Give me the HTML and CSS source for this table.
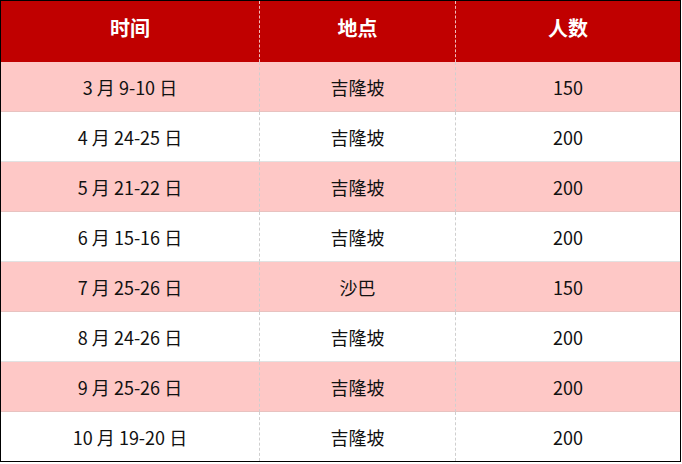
FILE: index.html
```html
<!DOCTYPE html>
<html lang="zh">
<head>
<meta charset="utf-8">
<title>日程</title>
<link rel="stylesheet" href="styles.css">
</head>
<body>
<div class="table">
  <div class="cell head">时间</div>
  <div class="cell head">地点</div>
  <div class="cell head last">人数</div>

  <div class="cell pink">3 月 9-10 日</div>
  <div class="cell pink">吉隆坡</div>
  <div class="cell pink last">150</div>

  <div class="cell">4 月 24-25 日</div>
  <div class="cell">吉隆坡</div>
  <div class="cell last">200</div>

  <div class="cell pink">5 月 21-22 日</div>
  <div class="cell pink">吉隆坡</div>
  <div class="cell pink last">200</div>

  <div class="cell">6 月 15-16 日</div>
  <div class="cell">吉隆坡</div>
  <div class="cell last">200</div>

  <div class="cell pink">7 月 25-26 日</div>
  <div class="cell pink">沙巴</div>
  <div class="cell pink last">150</div>

  <div class="cell">8 月 24-26 日</div>
  <div class="cell">吉隆坡</div>
  <div class="cell last">200</div>

  <div class="cell pink">9 月 25-26 日</div>
  <div class="cell pink">吉隆坡</div>
  <div class="cell pink last">200</div>

  <div class="cell bottom">10 月 19-20 日</div>
  <div class="cell bottom">吉隆坡</div>
  <div class="cell bottom last">200</div>
</div>
</body>
</html>
```

FILE: styles.css
```css
html, body {
  margin: 0;
  padding: 0;
  background: #ffffff;
}

.table {
  width: 681px;
  height: 462px;
  box-sizing: border-box;
  border: 1px solid #000000;
  display: grid;
  grid-template-columns: 259px 196px 1fr;
  grid-template-rows: 61px repeat(7, 50px) 49px;
  font-family: "Noto Sans CJK SC", "Noto Sans", sans-serif;
}

.cell {
  display: flex;
  align-items: center;
  justify-content: center;
  box-sizing: border-box;
  border-right: 1px dashed #cfcfcf;
  border-bottom: 1px solid #e2e2e2;
  font-size: 18px;
  color: #111111;
  background: #ffffff;
  line-height: 1;
}

.cell.last {
  border-right: none;
}

.cell.bottom {
  border-bottom: none;
}

.cell.pink {
  background: #fec8c6;
  border-bottom-color: #e8c2c0;
}

.cell.head {
  background: #c00000;
  color: #ffffff;
  font-size: 20px;
  font-weight: 700;
  padding-bottom: 8px;
  border-bottom: none;
  border-right: 1px dashed #f2bcbc;
}

.cell.head.last {
  border-right: none;
}
```
